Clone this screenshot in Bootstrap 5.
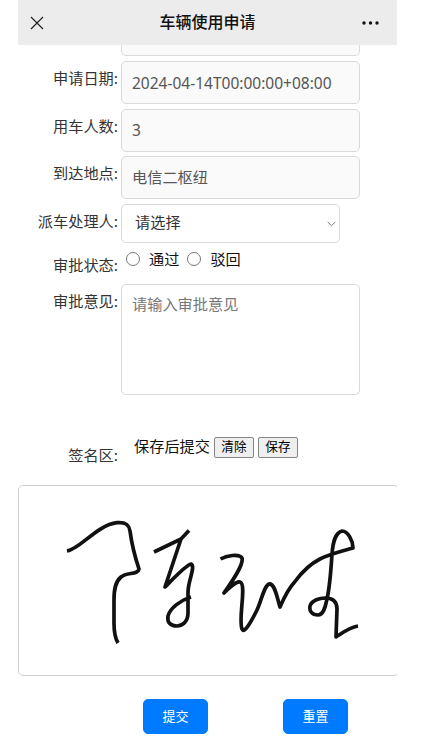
<!DOCTYPE html>
<html lang="zh-CN">
<head>
<meta charset="utf-8">
<meta name="viewport" content="width=device-width, initial-scale=1.0">
<title>车辆使用申请</title>
<link href="https://cdn.jsdelivr.net/npm/bootstrap@5.3.1/dist/css/bootstrap.min.css" rel="stylesheet">
<script src="https://cdn.jsdelivr.net/npm/bootstrap@5.3.1/dist/js/bootstrap.bundle.min.js"></script>
<style>
body {font-family:"Liberation Sans","Noto Sans CJK SC",sans-serif;font-size:15.2px;line-height:20px;color:#111;background:#fff;}
.phone {width:379px;height:745px;margin-left:18px;}
.topbar {height:45px;padding:0 18px 0 12px;background:#ececec;flex:none;}
.topbar h1 {font-size:16px;line-height:20px;font-weight:500;padding-left:9px;}
.line {display:flex;align-items:flex-start;height:47.6px;}
.tag {width:100px;text-align:right;color:#333;padding-top:6px;flex:none;font-family:"Noto Sans CJK SC",sans-serif;}
.form-control, .form-select {font-size:15.2px;border:1px solid #d9d9d9;border-radius:5px;margin-left:3px;line-height:20px;padding:0 10px;}
.form-control {width:239px;height:43px;}
.form-control:disabled {background:#fafafa;color:#555;}
.stamp {font-family:"Noto Sans",sans-serif;font-size:15.5px;}
.place {padding-bottom:3px;}
.form-select {width:219px;height:39px;padding-left:13px;padding-bottom:1px;color:#333;background-image:none;}
.pull {width:219px;margin-left:3px;}
.pull .form-select {margin-left:0;}
.pull svg {position:absolute;right:4px;top:17px;}
textarea.form-control {height:111px;padding-top:10px;resize:none;background:linear-gradient(135deg,#fff 50%,#777 50%) right bottom/3px 3px no-repeat;}
textarea::placeholder {color:#777!important;}
.cut {height:16px;}
.cut .form-control {height:11px;border-top:0;border-radius:0 0 5px 5px;margin-left:103px;}
.pick {height:34px;margin-top:-1px;}
.pick .tag {padding-top:4px;}
.pick > div {height:20px;margin-left:8px;}
.pick input {width:14px;height:14px;margin:0 0 3px;}
.pick span {margin-left:9px;}
.pick span + input {margin-left:8px;}
.sign {margin-top:42px;height:48px;}
.sign .tag {padding-top:7px;}
.save {height:20px;margin-left:16px;}
.tiny {font-size:12.6px;line-height:16px;height:21px;padding:0 6px;border:1px solid #858585;border-radius:2px;background:#efefef;color:#000;width:40px;white-space:nowrap;}
.pad {height:191px;width:381px;border:1px solid #d0d0d0;border-radius:5px;flex:none;}
.acts {padding:23px 0 0 125px;gap:75px;}
.btn-primary {--bs-btn-bg:#007bff;--bs-btn-border-color:#007bff;width:65px;height:35px;font-size:13px;line-height:20px;padding:0;border-radius:5px;}
</style>
</head>
<body>
<div class="phone d-flex flex-column overflow-hidden">

<header class="topbar d-flex justify-content-between align-items-center">
<svg width="14" height="14" viewBox="0 0 14 14" fill="none" stroke="#222" stroke-width="1.2"><path d="M1 1l12 12M13 1L1 13"/></svg>
<h1 class="m-0">车辆使用申请</h1>
<svg width="17" height="4" viewBox="0 0 17 4" fill="#111"><circle cx="2" cy="2" r="1.7"/><circle cx="8.5" cy="2" r="1.7"/><circle cx="15" cy="2" r="1.7"/></svg>
</header>

<form>
<div class="cut"><input class="form-control" disabled></div>
<div class="line"><label class="tag">申请日期:</label><input class="form-control stamp" value="2024-04-14T00:00:00+08:00" disabled></div>
<div class="line"><label class="tag">用车人数:</label><input class="form-control stamp" value="3" disabled></div>
<div class="line"><label class="tag">到达地点:</label><input class="form-control place" value="电信二枢纽" disabled></div>
<div class="line"><label class="tag">派车处理人:</label>
<div class="pull position-relative"><select class="form-select"><option>请选择</option></select>
<svg width="9" height="6" viewBox="0 0 9 6" fill="none" stroke="#777" stroke-width="1"><path d="M.7 1l3.8 3.7L8.3 1"/></svg></div>
</div>
<div class="line pick"><label class="tag">审批状态:</label>
<div class="d-flex align-items-center"><input type="radio" name="state"><span>通过</span><input type="radio" name="state"><span>驳回</span></div>
</div>
<div class="line h-auto"><label class="tag">审批意见:</label><textarea class="form-control" placeholder="请输入审批意见"></textarea></div>
<div class="line sign"><label class="tag">签名区:</label>
<div class="d-flex align-items-center save"><span>保存后提交</span><button type="button" class="tiny ms-1">清除</button><button type="button" class="tiny ms-1">保存</button></div>
</div>
<div class="pad">
<svg class="d-block" width="379" height="189" viewBox="19 486 379 189" fill="none" stroke="#111" stroke-width="3.7" stroke-linejoin="round">
<path d="M67 551C80 549 97 525 117 522.7C125 522 129 524 130 531C132 546 136 560 139 569C138 575 127 572 121 577C115 582 114 590 114 600V623C114 631 115 638 118 643"/>
<path d="M154 552L181 539L189 530.5M181 539L165 587C173 579 186 565 191 564C196 566 188 581 188 592V613C188 621 183 626 177 626C170 626 167 622 168 616C170 608 181 600 191 597"/>
<path d="M220.5 559C226 556 239 553 242 558C244 565 231 583 224 593C229 588 236 581 240 582C247 584 238 619 242 629C244 635 252 620 257 610C261 602 264 586 269 584C275 583 277 598 280 607C283 600 289 588 295 581.5C302 572 312 563 320 559C330 554 343 551 353 548C353 541 348 531 342 531C335 533 333 542 332 554C331 570 330 586 327 599C325 609 323 615 318 615C312 615 309 611 310 606C312 600 320 598 325 598C333 598 337 602 337 609L336 637C342 633 350 627 358 626"/>
</svg>
</div>
<div class="d-flex acts"><button type="button" class="btn btn-primary">提交</button><button type="button" class="btn btn-primary">重置</button></div>
</form>
</div>
</body>
</html>
